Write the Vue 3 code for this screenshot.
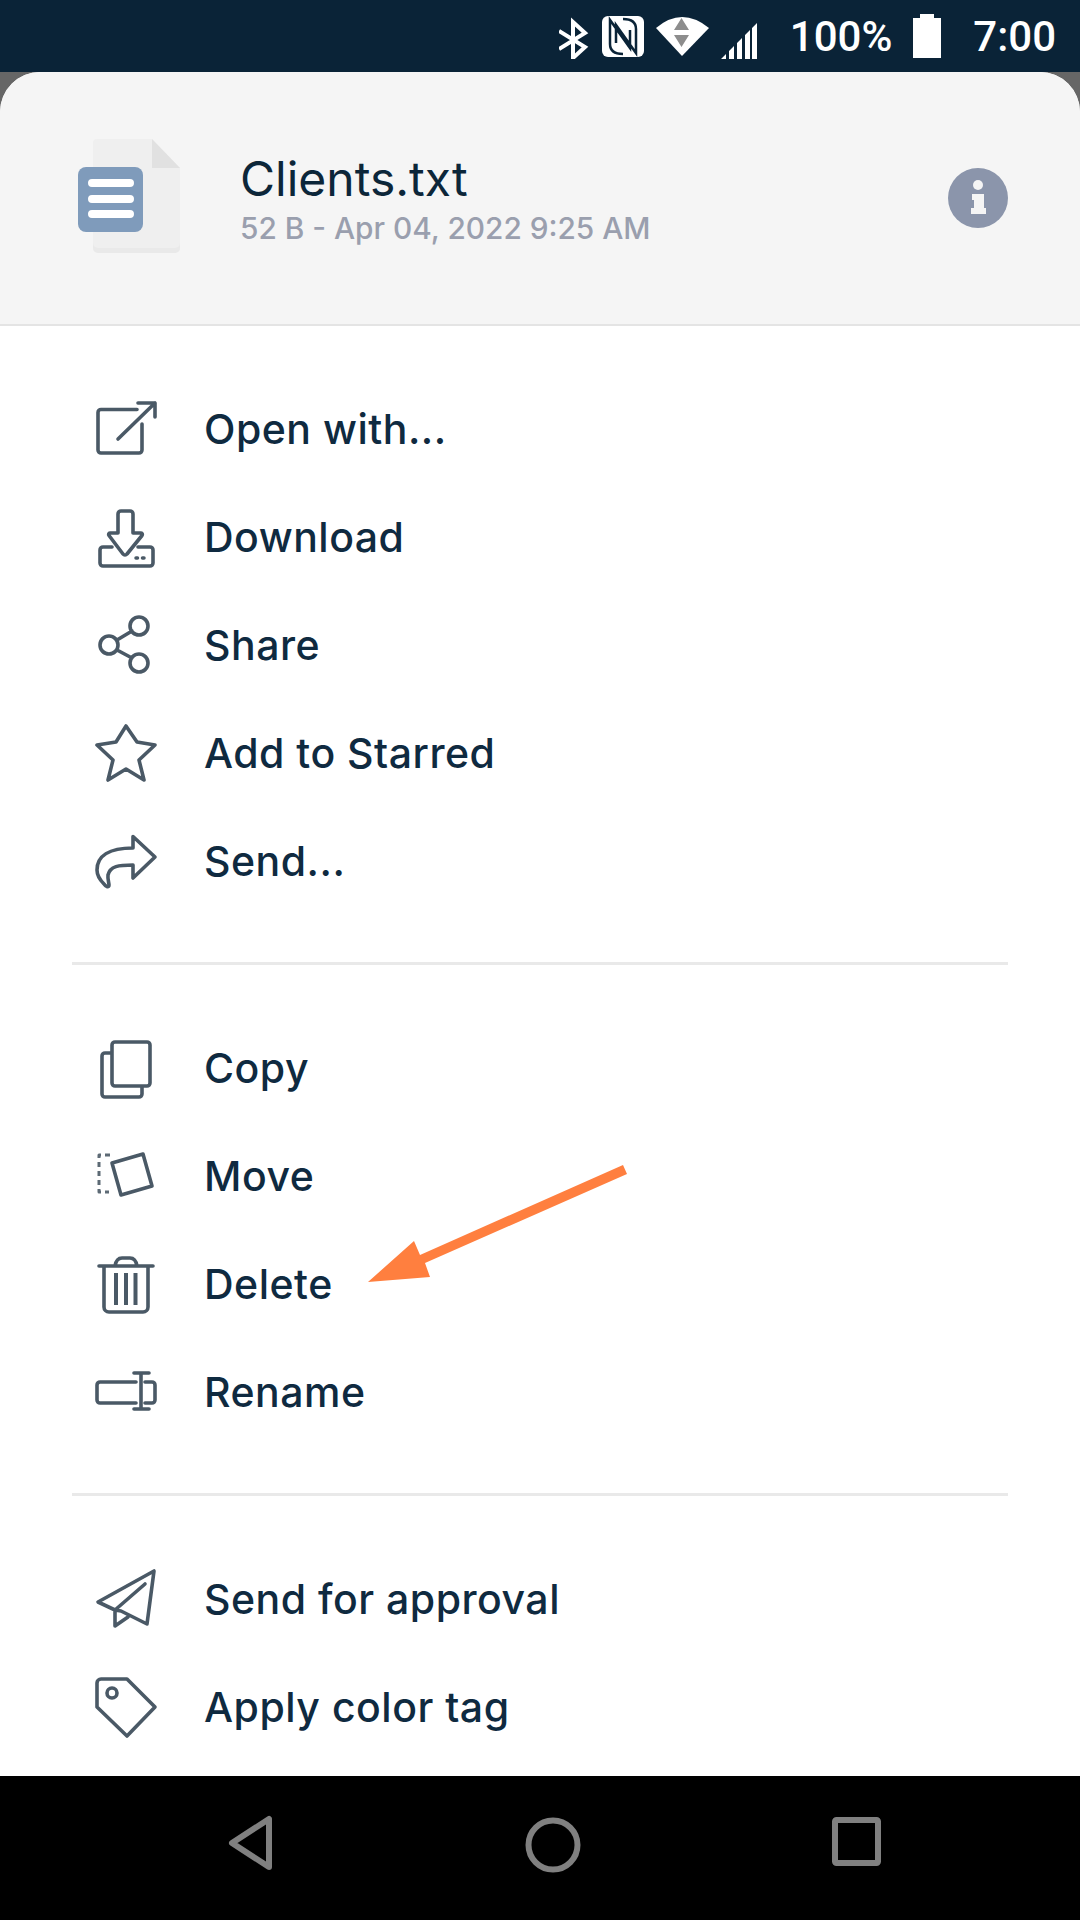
<script setup>
const groups = [
  [
    { label: 'Open with...', paths: [{ d: 'M42 11.500H6a3 3 0 0 0-3 3V52a3 3 0 0 0 3 3H44a3 3 0 0 0 3-3V26M23 41L60 5M43 5H60V19' }] },
    { label: 'Download', paths: [{ d: 'M23 27V8a3 3 0 0 1 3-3H35a3 3 0 0 1 3 3V27H46a1.500 1.500 0 0 1 1 2.500L32 48a2.500 2.500 0 0 1-4 0L14 29.500a1.500 1.500 0 0 1 1-2.500ZM17 41H8a3 3 0 0 0-3 3V57a3 3 0 0 0 3 3H55a3 3 0 0 0 3-3V44a3 3 0 0 0-3-3H43' }, { d: 'M41 52h1.500M47.500 52h1.500', cls: 'dots' }] },
    { label: 'Share', paths: [{ d: 'M35 12a9 9 0 1 0 18 0a9 9 0 1 0-18 0ZM5 31a9 9 0 1 0 18 0a9 9 0 1 0-18 0ZM35 49a9 9 0 1 0 18 0a9 9 0 1 0-18 0ZM22 26L37 17M22 36L37 44' }] },
    { label: 'Add to Starred', paths: [{ d: 'M31 4L42 20L60 23L44 38L49 58L31 47L13 58L18 38L2 23L21 20Z' }] },
    { label: 'Send...', paths: [{ d: 'M38 6.500L60 27L38 48V35C24 35 15 36 13 45C12.500 49 14 53 14 55C14 58 11 57 9 54C5 50 2 46 2 40C2 26 14 18 38 18Z' }] }
  ],
  [
    { label: 'Copy', paths: [{ d: 'M20 5H52a3 3 0 0 1 3 3V46a3 3 0 0 1-3 3H20a3 3 0 0 1-3-3V8a3 3 0 0 1 3-3ZM17 16H10a3 3 0 0 0-3 3V57a3 3 0 0 0 3 3H44a3 3 0 0 0 3-3V49' }] },
    { label: 'Move', paths: [{ d: 'M17 18L48 9L57 41L26 50Z' }, { d: 'M15 10H4V47H14', cls: 'dash' }] },
    { label: 'Delete', paths: [{ d: 'M4 13H58M20 13C21 7 24 5 27 5H35C38 5 41 7 42 13M9 13V54a5 5 0 0 0 5 5H48a5 5 0 0 0 5-5V13' }, { d: 'M21 20V52M31 20V52M40.500 20V52', cls: 'bars' }] },
    { label: 'Rename', paths: [{ d: 'M41 21H5a3 3 0 0 0-3 3V39a3 3 0 0 0 3 3H41M50 21H57a3 3 0 0 1 3 3V39a3 3 0 0 1-3 3H50' }, { d: 'M46 12V48M39 12H54M39 48H54' }] }
  ],
  [
    { label: 'Send for approval', paths: [{ d: 'M59 3L3 34L20 42V58L33 49M59 3L52 56L26 43L20 42L50 16' }] },
    { label: 'Apply color tag', paths: [{ d: 'M6 3H32L60 31L32 60L2 31V7a4 4 0 0 1 4-4Z' }, { d: 'M12 17a5 5 0 1 0 10 0a5 5 0 1 0-10 0Z' }] }
  ]
]
</script>

<template>
  <div class="screen">
    <header class="status">
      <svg class="status-icons" width="198" height="44" viewBox="558 15 198 44">
        <path class="bt" d="M558 31L584 47L572 58V22L584 33L558 49" />
        <rect x="601" y="16" width="42" height="41" rx="6" fill="#fff" />
        <path class="nfc" d="M622 54Q609 54 609 44V20L629 48V30M622 19Q635 19 635 29V53L615 25V43" />
        <path d="M655 28Q681 6 708 28L681 56Z" fill="#fff" />
        <path d="M680.500 18L688 30H673ZM673 35H688L680.500 47Z" fill="#8d8d8d" />
        <path d="M720 59H725V54L720 59ZM728 59H733V46L728 51ZM736 59H741V38L736 43ZM744 59H749V30L744 35ZM751 59H756V23L751 28Z" fill="#fff" />
      </svg>
      <span class="pct">100%</span>
      <svg class="battery" width="28" height="44" viewBox="0 0 28 44">
        <path d="M7 0H21V4H28V44H0V4H7Z" fill="#fff" />
      </svg>
      <span class="time">7:00</span>
    </header>

    <div class="scrim">
      <main class="sheet">
        <section class="file">
          <div class="file-icon">
            <svg width="110" height="116" viewBox="0 0 110 116">
              <path d="M15 5a4 4 0 0 1 4-4H74L102 30V110a5 5 0 0 1-5 5H20a5 5 0 0 1-5-5Z" fill="#efefef" />
              <path d="M74 1L102 30H74Z" fill="#e1e1e1" />
              <path d="M15 105a5 5 0 0 0 5 5H97a5 5 0 0 0 5-5V110a5 5 0 0 1-5 5H20a5 5 0 0 1-5-5Z" fill="#e9e9e9" />
              <rect x="0" y="29" width="65" height="65" rx="8" fill="#7f9bbb" />
              <path d="M14 45H52M14 61H52M14 76H52" stroke="#fff" stroke-width="8" stroke-linecap="round" />
            </svg>
          </div>
          <div class="file-text">
            <div class="file-name">Clients.txt</div>
            <div class="file-meta">52 B - Apr 04, 2022 9:25 AM</div>
          </div>
          <svg class="info" width="60" height="60" viewBox="0 0 60 60">
            <circle cx="30" cy="30" r="30" fill="#8b95ab" />
            <circle cx="30" cy="17" r="5" fill="#f5f5f5" />
            <path d="M24 26H36V40H38V46H23V40H26V32H24Z" fill="#f5f5f5" />
          </svg>
        </section>

        <section v-for="(group, g) in groups" :key="g" class="group">
          <div v-for="item in group" :key="item.label" class="row">
            <svg class="row-icon" width="64" height="64" viewBox="0 0 64 64">
              <path v-for="(p, i) in item.paths" :key="i" :d="p.d" :class="p.cls" />
            </svg>
            <span class="row-label">{{ item.label }}</span>
          </div>
        </section>
      </main>
    </div>

    <nav class="navbar">
      <svg width="1080" height="144" viewBox="0 1776 1080 144">
        <g fill="none" stroke="#808080" stroke-width="6" stroke-linejoin="round">
          <path d="M269 1819V1867L232 1843Z" />
          <circle cx="553" cy="1845" r="24.500" />
          <rect x="835" y="1820" width="43" height="43" rx="1.500" />
        </g>
      </svg>
    </nav>

    <svg class="arrow" width="320" height="160" viewBox="340 1140 320 160">
      <path d="M623 1165L420 1255L414 1241L368 1282L430 1277L425 1263L627 1174Z" fill="#ff7f3f" />
    </svg>
  </div>
</template>

<style scoped>
.screen {
  position: relative;
  width: 1080px;
  height: 1920px;
  display: flex;
  flex-direction: column;
  overflow: hidden;
  font-family: Inter, "Liberation Sans", sans-serif;
}
.status {
  flex: none;
  height: 72px;
  background: #0a2337;
  display: flex;
  align-items: center;
  justify-content: flex-end;
  padding-right: 24px;
  color: #fff;
  font-family: Roboto, "Liberation Sans", sans-serif;
  font-size: 42px;
  font-weight: 500;
  line-height: 72px;
}
.pct,
.time {
  padding-top: 2px;
}
.status-icons {
  margin-right: 33px;
  margin-top: 2px;
}
.bt {
  fill: none;
  stroke: #fff;
  stroke-width: 4;
}
.nfc {
  fill: none;
  stroke: #0a2337;
  stroke-width: 2.5;
}
.battery {
  margin-left: 21px;
  margin-right: 32px;
  margin-top: -1px;
}
.scrim {
  flex: 1;
  min-height: 0;
  background: #666;
}
.sheet {
  height: 100%;
  background: #fff;
  border-radius: 40px 40px 0 0;
  overflow: hidden;
}
.file {
  height: 252px;
  background: #f5f5f5;
  border-bottom: 2px solid #e4e4e4;
  display: flex;
  align-items: center;
  padding: 0 72px 0 78px;
}
.file-icon {
  width: 162px;
  height: 116px;
  margin-top: -4px;
}
.file-text {
  flex: 1;
  margin-top: 1px;
}
.file-name {
  font-size: 48px;
  line-height: 56px;
  color: #0c2639;
}
.file-meta {
  font-size: 29.800px;
  line-height: 36px;
  font-weight: 500;
  color: #9a9fae;
  margin-top: 3px;
}
.group {
  margin: 0 72px;
  padding: 50px 0 46px;
  border-bottom: 3px solid #e9e9e9;
}
.group:last-child {
  border-bottom: none;
}
.row {
  height: 108px;
  display: flex;
  align-items: center;
  margin-left: 23px;
}
.row-icon {
  flex: none;
  width: 64px;
  height: 64px;
  margin-right: 45px;
  overflow: visible;
}
.row-icon path {
  fill: none;
  stroke: #4a5966;
  stroke-width: 3.6;
  stroke-linejoin: round;
  stroke-linecap: round;
}
.row-icon path.dots {
  stroke-width: 3.5;
}
.row-icon path.dash {
  stroke-width: 3;
  stroke-dasharray: 5 4;
  stroke-linecap: butt;
  stroke: #5d6a75;
}
.row-icon path.bars {
  stroke-width: 4;
  stroke-linecap: butt;
}
.row-label {
  font-size: 41px;
  font-weight: 500;
  letter-spacing: 0.5px;
  padding-bottom: 2px;
  color: #0f2a40;
  white-space: nowrap;
}
.navbar {
  flex: none;
  height: 144px;
  background: #000;
}
.navbar svg {
  display: block;
}
.arrow {
  position: absolute;
  left: 340px;
  top: 1140px;
}
</style>

<style>
html, body {
  margin: 0;
  background: #000;
}
</style>
